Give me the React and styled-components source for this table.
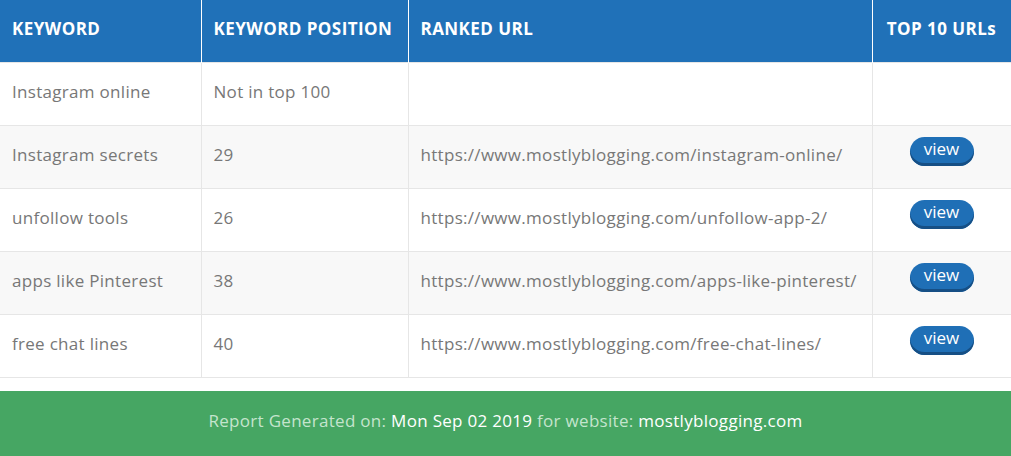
import React from "react";
import styled, { createGlobalStyle } from "styled-components";

const GlobalStyle = createGlobalStyle`
  body {
    margin: 0;
    background: #fff;
    font-family: "Open Sans", "Liberation Sans", sans-serif;
  }
`;

const rows = [
  { keyword: "Instagram online", position: "Not in top 100", url: "" },
  {
    keyword: "Instagram secrets",
    position: "29",
    url: "https://www.mostlyblogging.com/instagram-online/",
  },
  {
    keyword: "unfollow tools",
    position: "26",
    url: "https://www.mostlyblogging.com/unfollow-app-2/",
  },
  {
    keyword: "apps like Pinterest",
    position: "38",
    url: "https://www.mostlyblogging.com/apps-like-pinterest/",
  },
  {
    keyword: "free chat lines",
    position: "40",
    url: "https://www.mostlyblogging.com/free-chat-lines/",
  },
];

const App = () => {
  return (
    <Page>
      <GlobalStyle />
      <Table>
        <colgroup>
          <col style={{ width: 201 }} />
          <col style={{ width: 207 }} />
          <col style={{ width: 464 }} />
          <col style={{ width: 139 }} />
        </colgroup>
        <thead>
          <tr>
            <HeadCell>KEYWORD</HeadCell>
            <HeadCell>KEYWORD POSITION</HeadCell>
            <HeadCell>RANKED URL</HeadCell>
            <HeadCell $center>TOP 10 URLs</HeadCell>
          </tr>
        </thead>
        <tbody>
          {rows.map((r, i) => (
            <Row key={r.keyword} $alt={i % 2 === 1}>
              <Cell>{r.keyword}</Cell>
              <Cell>{r.position}</Cell>
              <Cell>{r.url}</Cell>
              <Cell $center>{r.url && <ViewButton>view</ViewButton>}</Cell>
            </Row>
          ))}
        </tbody>
      </Table>
      <Footer>
        <Muted>Report Generated on: </Muted>
        <Strong>Mon Sep 02 2019</Strong>
        <Muted> for website: </Muted>
        <Strong>mostlyblogging.com</Strong>
      </Footer>
    </Page>
  );
};

export default App;

const Page = styled.div`
  width: 1011px;
`;

const Table = styled.table`
  width: 1011px;
  border-collapse: collapse;
  table-layout: fixed;
`;

const HeadCell = styled.th`
  background: #2071b8;
  color: #fff;
  height: 62px;
  padding: ${(p) => (p.$center ? "0 0 4px 0" : "0 0 4px 12px")};
  text-align: ${(p) => (p.$center ? "center" : "left")};
  font-size: 17px;
  font-weight: 700;
  letter-spacing: 0.45px;
  white-space: nowrap;
  border-left: 1px solid #fff;
  border-right: 1px solid #fff;
  box-sizing: border-box;

  &:first-child {
    border-left: none;
  }
`;

const Row = styled.tr`
  background: ${(p) => (p.$alt ? "#f8f8f8" : "#fff")};
`;

const Cell = styled.td`
  height: 63px;
  box-sizing: border-box;
  padding: ${(p) => (p.$center ? "0 0 10px 0" : "0 0 4px 12px")};
  border: 1px solid #e6e6e6;
  color: #777;
  font-size: 17px;
  letter-spacing: 0.3px;
  text-align: ${(p) => (p.$center ? "center" : "left")};
  white-space: nowrap;

  &:first-child {
    border-left: none;
  }
`;

const ViewButton = styled.button`
  display: inline-block;
  width: 64px;
  height: 29px;
  border: none;
  border-radius: 15px;
  background: #1f6fb6;
  box-shadow: inset 0 -3px 0 #164f85;
  color: #fff;
  font-family: "Open Sans", "Liberation Sans", sans-serif;
  font-size: 17px;
  line-height: 22px;
  padding: 0 0 5px;
  cursor: pointer;
`;

const Footer = styled.div`
  margin-top: 13px;
  height: 65px;
  padding-bottom: 5px;
  box-sizing: border-box;
  background: #46a663;
  display: flex;
  align-items: center;
  justify-content: center;
  font-size: 17px;
  letter-spacing: 0.3px;
  white-space: pre;
`;

const Muted = styled.span`
  color: #c4e4cd;
`;

const Strong = styled.span`
  color: #fff;
`;
